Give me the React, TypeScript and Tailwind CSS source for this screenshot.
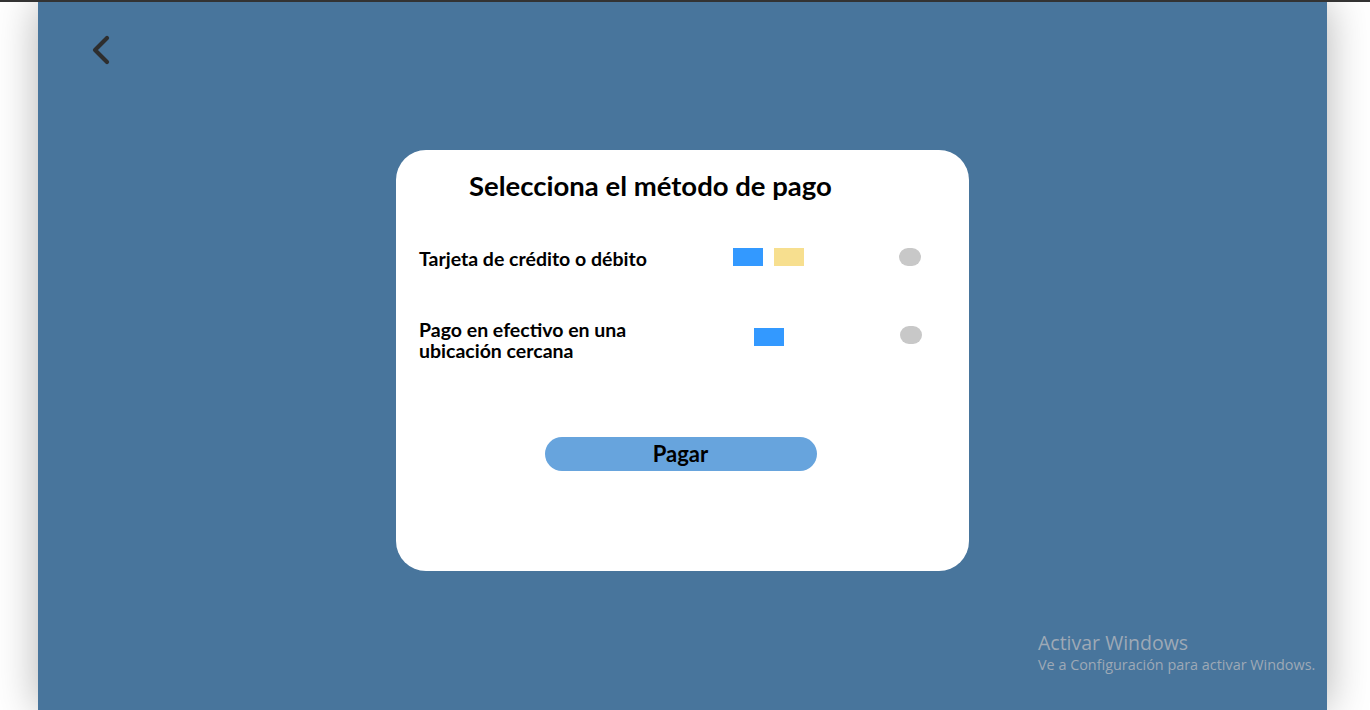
import { ChevronLeft } from 'lucide-react';

function PayOption({
  label,
  cards,
  cardOffset,
  dotOffset,
}: {
  label: React.ReactNode;
  cards: string[];
  cardOffset: string;
  dotOffset: string;
}) {
  return (
    <div className="flex items-center">
      <div className="w-[314px] text-[19.5px] font-bold leading-[21px] text-black">{label}</div>
      <div className={`flex w-[71px] justify-center gap-[11px] ${cardOffset}`}>
        {cards.map((c, i) => (
          <span key={i} className={`h-[18px] w-[30px] ${c}`} />
        ))}
      </div>
      <span className={`h-[18px] w-[22px] rounded-full bg-[#c8c8c8] ${dotOffset}`} />
    </div>
  );
}

export default function App() {
  return (
    <div
      className="flex h-[710px] w-full overflow-hidden border-t-2 border-[#333] bg-white"
      style={{ fontFamily: 'Lato, "Open Sans", sans-serif' }}
    >
      <div className="w-[38px] shrink-0" />
      <main className="relative flex w-[1289px] shrink-0 flex-col items-center bg-[#48759c] pt-[148px] shadow-[0_0_40px_rgba(0,0,0,0.3)]">
        <button className="absolute left-[39px] top-[24px] text-[#2e2e2e]">
          <ChevronLeft size={48} strokeWidth={2.1} />
        </button>

        <section className="flex h-[421px] w-[573px] flex-col rounded-[30px] bg-white">
          <h1 className="pl-[73px] pt-[20px] text-[27.5px] font-bold leading-[32px] text-black">
            Selecciona el método de pago
          </h1>

          <div className="mt-[46px] flex flex-col gap-[50px] pl-[23px]">
            <PayOption
              label="Tarjeta de crédito o débito"
              cards={['bg-[#3399ff]', 'bg-[#f7df8f]']}
              cardOffset="-mt-[3px]"
              dotOffset="ml-[95px] -mt-[3px]"
            />
            <PayOption
              label={
                <>
                  Pago en efectivo en una
                  <br />
                  ubicación cercana
                </>
              }
              cards={['bg-[#3399ff]']}
              cardOffset="-mt-[6px]"
              dotOffset="ml-[96px] -mt-[10px]"
            />
          </div>

          <div className="mt-[76px] flex justify-center pr-[4px]">
            <button className="h-[34px] w-[272px] rounded-full bg-[#67a4dd] text-[22px] font-bold leading-[34px] text-black">
              Pagar
            </button>
          </div>
        </section>

        <div
          className="absolute left-[1000px] top-[628px] text-[#9ea9b6]"
          style={{ fontFamily: '"Open Sans", "Noto Sans", sans-serif' }}
        >
          <div className="text-[19.5px] leading-[26px]">Activar Windows</div>
          <div className="text-[14.4px] leading-[18px]">Ve a Configuración para activar Windows.</div>
        </div>
      </main>
      <div className="flex-1" />
    </div>
  );
}
